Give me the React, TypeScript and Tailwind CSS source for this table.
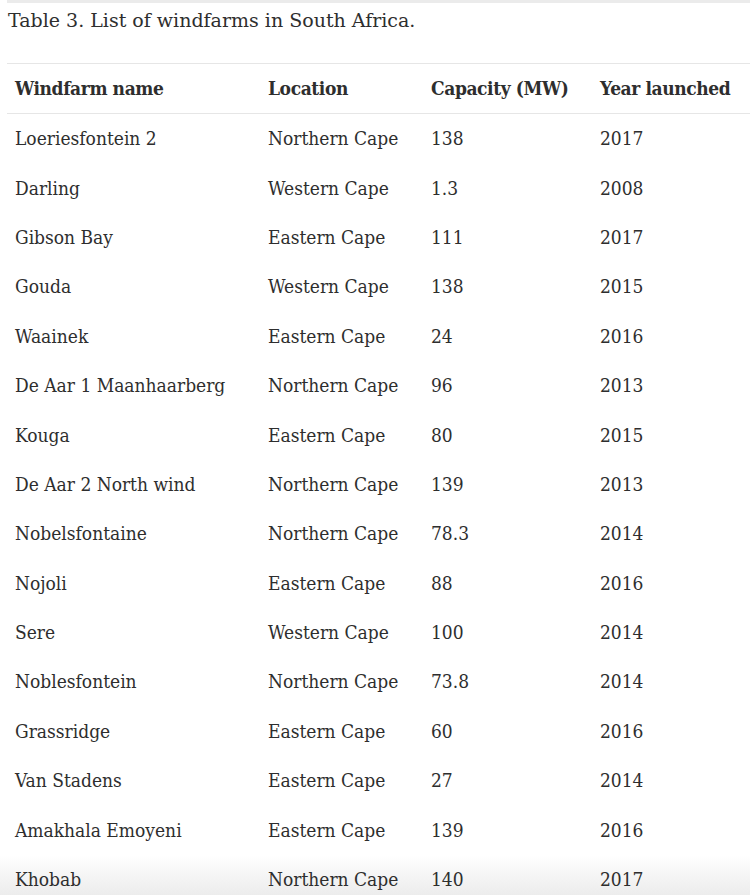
const rows: [string, string, string, string][] = [
  ["Loeriesfontein 2", "Northern Cape", "138", "2017"],
  ["Darling", "Western Cape", "1.3", "2008"],
  ["Gibson Bay", "Eastern Cape", "111", "2017"],
  ["Gouda", "Western Cape", "138", "2015"],
  ["Waainek", "Eastern Cape", "24", "2016"],
  ["De Aar 1 Maanhaarberg", "Northern Cape", "96", "2013"],
  ["Kouga", "Eastern Cape", "80", "2015"],
  ["De Aar 2 North wind", "Northern Cape", "139", "2013"],
  ["Nobelsfontaine", "Northern Cape", "78.3", "2014"],
  ["Nojoli", "Eastern Cape", "88", "2016"],
  ["Sere", "Western Cape", "100", "2014"],
  ["Noblesfontein", "Northern Cape", "73.8", "2014"],
  ["Grassridge", "Eastern Cape", "60", "2016"],
  ["Van Stadens", "Eastern Cape", "27", "2014"],
  ["Amakhala Emoyeni", "Eastern Cape", "139", "2016"],
  ["Khobab", "Northern Cape", "140", "2017"],
];

const cols = "grid grid-cols-[253px_163px_169px_1fr]";

export default function App() {
  return (
    <div className="h-[895px] w-[750px] overflow-hidden bg-[linear-gradient(to_bottom,#ffffff_855px,#ececec_895px)] text-[#2e2e2e]">
      <div className="ml-[7px] h-[3px] bg-[#ebebeb]" />
      <div className="pl-[8px] pt-[4px] text-[19px] leading-[26px] font-['DejaVu_Serif',serif]">
        Table 3. List of windfarms in South Africa.
      </div>
      <div className="ml-[7px] mt-[30px] font-['DejaVu_Serif_Condensed','DejaVu_Serif',serif] text-[19px]">
        <div className={`${cols} border-y border-[#e6e6e6] py-[12px] font-bold leading-[25px] tracking-[-0.4px]`}>
          <div className="pl-[8px]">Windfarm name</div>
          <div className="pl-[8px]">Location</div>
          <div className="pl-[8px]">Capacity (MW)</div>
          <div className="pl-[8px]">Year launched</div>
        </div>
        {rows.map((r) => (
          <div key={r[0]} className={`${cols} h-[49.4px] items-center leading-[25px]`}>
            {r.map((c, i) => (
              <div key={i} className="pl-[8px]">
                {c}
              </div>
            ))}
          </div>
        ))}
      </div>
    </div>
  );
}
